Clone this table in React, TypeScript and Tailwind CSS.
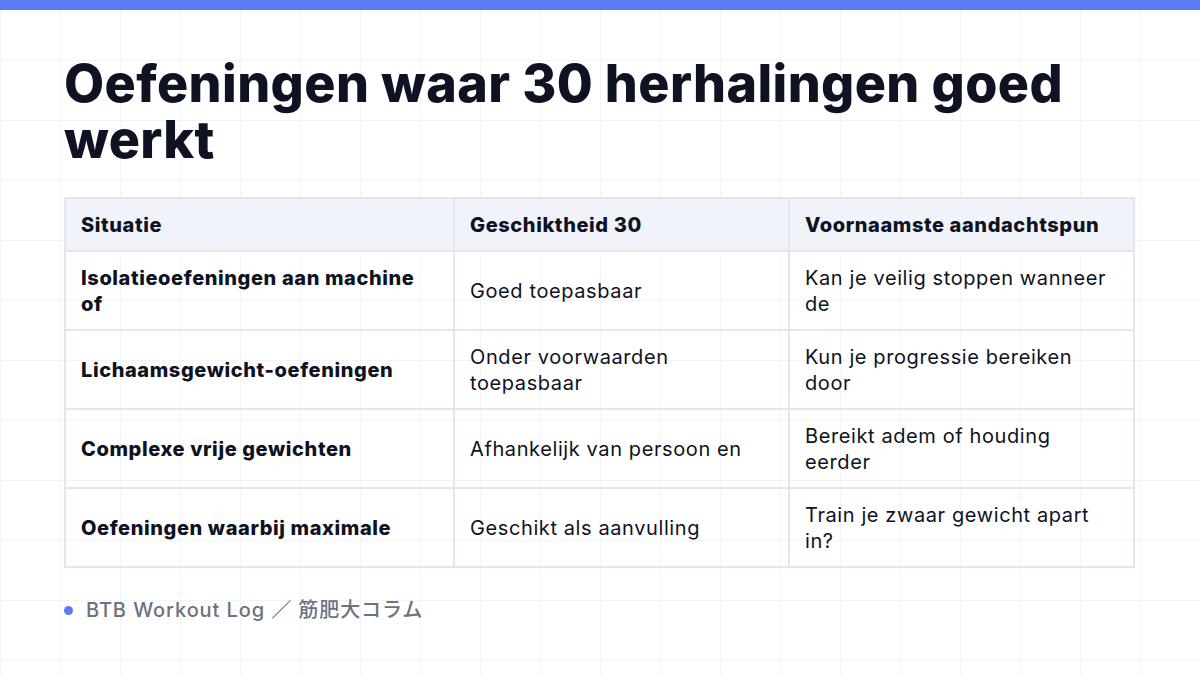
const ROWS = [
  {
    situation: "Isolatieoefeningen aan machine of",
    fit: "Goed toepasbaar",
    note: "Kan je veilig stoppen wanneer de",
  },
  {
    situation: "Lichaamsgewicht-oefeningen",
    fit: "Onder voorwaarden toepasbaar",
    note: "Kun je progressie bereiken door",
  },
  {
    situation: "Complexe vrije gewichten",
    fit: "Afhankelijk van persoon en",
    note: "Bereikt adem of houding eerder",
  },
  {
    situation: "Oefeningen waarbij maximale",
    fit: "Geschikt als aanvulling",
    note: "Train je zwaar gewicht apart in?",
  },
];

export default function App() {
  return (
    <div
      className="relative w-[1200px] h-[675px] overflow-hidden bg-white text-[#0f1222]"
      style={{
        fontFamily: "Inter, 'Noto Sans CJK JP', sans-serif",
        backgroundImage:
          "linear-gradient(to right, #f3f4f7 1px, transparent 1px), linear-gradient(to bottom, #f3f4f7 1px, transparent 1px)",
        backgroundSize: "60px 60px",
      }}
    >
      <div className="h-[10px] bg-[#5b7cf6]" />

      <div className="px-[64px] pt-[46px]">
        <h1 className="text-[52px] font-extrabold leading-[56px] tracking-[0.4px] w-[1040px]">
          Oefeningen waar 30 herhalingen goed werkt
        </h1>

        <table className="mt-[29px] w-[1069px] table-fixed border-collapse text-[20px] leading-[26px] tracking-[0.6px]">
          <colgroup>
            <col className="w-[389px]" />
            <col className="w-[335px]" />
            <col className="w-[345px]" />
          </colgroup>
          <thead>
            <tr className="h-[53px] bg-[#f1f3fa]">
              <th className="border-2 border-[#e3e6f1] px-[15px] py-[12px] text-left font-extrabold">Situatie</th>
              <th className="border-2 border-[#e3e6f1] px-[15px] py-[12px] text-left font-extrabold">Geschiktheid 30</th>
              <th className="border-2 border-[#e3e6f1] px-[15px] py-[12px] text-left font-extrabold">Voornaamste aandachtspun</th>
            </tr>
          </thead>
          <tbody>
            {ROWS.map((r) => (
              <tr key={r.situation} className="h-[79px]">
                <td className="border-2 border-[#e3e6f1] px-[15px] py-[12px] font-extrabold">{r.situation}</td>
                <td className="border-2 border-[#e3e6f1] px-[15px] py-[12px]">{r.fit}</td>
                <td className="border-2 border-[#e3e6f1] px-[15px] py-[12px]">{r.note}</td>
              </tr>
            ))}
          </tbody>
        </table>

        <div className="mt-[28px] flex items-center gap-[13px] text-[20px] leading-[28px] tracking-[0.9px] font-medium text-[#6b7280]">
          <span className="w-[9px] h-[9px] rounded-full bg-[#5b7cf6]" />
          <span>BTB Workout Log ／ 筋肥大コラム</span>
        </div>
      </div>
    </div>
  );
}
